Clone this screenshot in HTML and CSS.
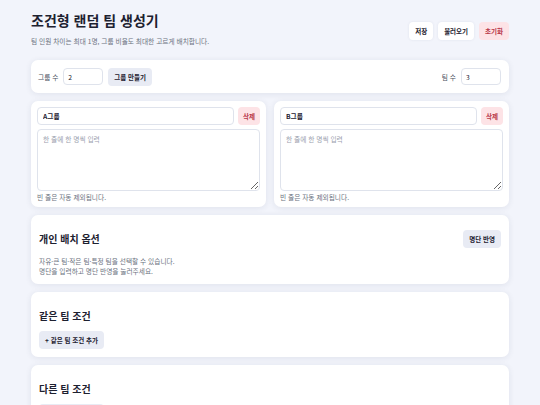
FILE: index.html
```html
<!DOCTYPE html>
<html lang="ko">
<head>
  <meta charset="UTF-8" />
  <meta name="viewport" content="width=device-width, initial-scale=1.0"/>
  <title>조건형 랜덤 팀 생성기</title>
  <link rel="stylesheet" href="styles.css">
</head>
<body>
  <div class="container">
    <header class="top">
      <div>
        <h1>조건형 랜덤 팀 생성기</h1>
        <p class="sub">팀 인원 차이는 최대 1명, 그룹 비율도 최대한 고르게 배치합니다.</p>
      </div>
      <div class="actions">
        <button class="btn white">저장</button>
        <button class="btn white">불러오기</button>
        <button class="btn danger">초기화</button>
      </div>
    </header>

    <div class="card setup">
      <div class="field">
        <label>그룹 수</label>
        <input type="number" value="2" />
        <button class="btn">그룹 만들기</button>
      </div>
      <div class="field">
        <label>팀 수</label>
        <input type="number" value="3" />
      </div>
    </div>

    <div class="groups">
      <div class="card group">
        <div class="group-head">
          <input type="text" class="name" value="A그룹" />
          <button class="btn danger">삭제</button>
        </div>
        <textarea placeholder="한 줄에 한 명씩 입력"></textarea>
        <p class="hint">빈 줄은 자동 제외됩니다.</p>
      </div>
      <div class="card group">
        <div class="group-head">
          <input type="text" class="name" value="B그룹" />
          <button class="btn danger">삭제</button>
        </div>
        <textarea placeholder="한 줄에 한 명씩 입력"></textarea>
        <p class="hint">빈 줄은 자동 제외됩니다.</p>
      </div>
    </div>

    <div class="card section">
      <div class="section-head">
        <h2>개인 배치 옵션</h2>
        <button class="btn">명단 반영</button>
      </div>
      <p class="desc">자유·큰 팀·작은 팀·특정 팀을 선택할 수 있습니다.<br>명단을 입력하고 명단 반영을 눌러주세요.</p>
    </div>

    <div class="card section">
      <h2>같은 팀 조건</h2>
      <button class="btn">+ 같은 팀 조건 추가</button>
    </div>

    <div class="card section">
      <h2>다른 팀 조건</h2>
      <button class="btn">+ 다른 팀 조건 추가</button>
    </div>
  </div>
</body>
</html>
```

FILE: styles.css
```css
body {
  font-family: "Noto Sans CJK KR", "Noto Sans", sans-serif;
  background-color: #f2f4fb;
  color: #1d2130;
  margin: 0;
}
.container {
  width: 478px;
  margin: 0 auto;
  padding-top: 10px;
}
.top {
  display: flex;
  justify-content: space-between;
  align-items: flex-start;
  margin-bottom: 14px;
}
h1 {
  font-size: 14px;
  font-weight: 700;
  line-height: 20px;
  margin: 0 0 7px 0;
}
.sub {
  font-size: 6.7px;
  color: #6b7280;
  margin: 0;
  line-height: 9px;
}
.actions {
  display: flex;
  gap: 5px;
  margin-top: 12px;
}
.btn {
  font-family: inherit;
  font-size: 6.5px;
  font-weight: 700;
  color: #1d2130;
  background-color: #e8ebf4;
  border: none;
  border-radius: 4px;
  height: 18px;
  padding: 0 6px;
}
.btn.white {
  background-color: #fff;
  box-shadow: 0 0 3px rgba(30,40,80,0.08);
}
.btn.danger {
  background-color: #fde3e6;
  color: #b8384a;
}
.card {
  background-color: white;
  border-radius: 7px;
  box-shadow: 0 1px 6px rgba(30,40,80,0.09);
  margin-bottom: 8px;
}
.setup {
  height: 33px;
  padding: 0 8px 0 7px;
  box-sizing: border-box;
  display: flex;
  justify-content: space-between;
  align-items: center;
}
.field {
  display: flex;
  align-items: center;
  gap: 5px;
}
.field label {
  font-size: 6.7px;
  color: #4b5060;
}
input, textarea {
  font-family: inherit;
  font-size: 6.7px;
  color: #1d2130;
  border: 1px solid #dfe3ec;
  border-radius: 4px;
  box-sizing: border-box;
  outline: none;
}
.field input {
  width: 40px;
  height: 17px;
  padding: 0 4px;
}
.groups {
  display: grid;
  grid-template-columns: 1fr 1fr;
  gap: 8px;
}
.group {
  padding: 6px 6px 5px 6px;
}
.group-head {
  display: flex;
  gap: 4px;
  margin-bottom: 4px;
}
.group-head .name {
  flex: 1;
  height: 18px;
  padding: 0 5px;
  font-weight: 700;
}
.group-head .btn {
  padding: 0 5px;
}
textarea {
  display: block;
  width: 100%;
  height: 62px;
  padding: 4px 5px;
  resize: vertical;
}
textarea::placeholder {
  color: #9aa0ad;
}
.hint {
  font-size: 6.7px;
  color: #6b7280;
  margin: 2px 0 0 0;
  line-height: 9px;
}
.section {
  padding: 18px 8px 8px 8px;
  display: flex;
  flex-direction: column;
  align-items: flex-start;
}
.section h2 {
  font-size: 10px;
  font-weight: 700;
  line-height: 12px;
  margin: 0 0 9px 0;
}
.section-head {
  display: flex;
  justify-content: space-between;
  align-items: center;
  align-self: stretch;
  margin: -3px 0 8px 0;
}
.section-head h2 {
  margin: 0;
}
.section .section-head h2 {
  margin: 0;
}
.desc {
  font-size: 6.7px;
  color: #6b7280;
  line-height: 10px;
  margin: 0;
}
```
